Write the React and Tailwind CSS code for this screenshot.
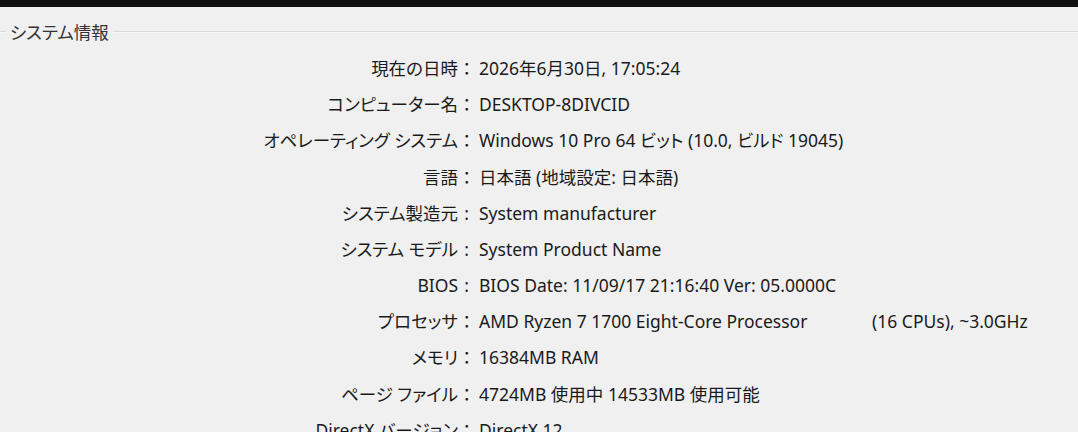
import React from "react";

// colon is drawn in its own fixed box so every label lines up on it
const rows = [
  { label: "現在の日時", colon: "：", value: "2026年6月30日, 17:05:24" },
  { label: "コンピューター名", colon: "：", value: "DESKTOP-8DIVCID" },
  { label: "オペレーティング システム", colon: "：", value: "Windows 10 Pro 64 ビット (10.0, ビルド 19045)" },
  { label: "言語", colon: "：", value: "日本語 (地域設定: 日本語)" },
  { label: "システム製造元", colon: ":", value: "System manufacturer" },
  { label: "システム モデル", colon: ":", value: "System Product Name" },
  { label: "BIOS", colon: ":", value: "BIOS Date: 11/09/17 21:16:40 Ver: 05.0000C" },
  { label: "プロセッサ", colon: "：", value: "AMD Ryzen 7 1700 Eight-Core Processor", extra: "(16 CPUs), ~3.0GHz" },
  { label: "メモリ", colon: "：", value: "16384MB RAM" },
  { label: "ページ ファイル", colon: "：", value: "4724MB 使用中 14533MB 使用可能" },
  { label: "DirectX バージョン", colon: "：", value: "DirectX 12" },
];

const App = () => {
  return (
    <div
      className="h-[432px] w-[1078px] overflow-hidden bg-[#f0f0f0] text-[#1a1a1a] [font-feature-settings:'palt']"
      style={{ fontFamily: '"Noto Sans", "Noto Sans CJK JP", sans-serif' }}
    >
      <div className="h-[7px] bg-[#111111]" />

      {/* group box header */}
      <div className="mt-[14px] flex items-center">
        <div className="h-[2px] w-[6px] border-t border-b border-t-[#d8d8d8] border-b-[#f8f8f8]" />
        <span className="px-[4px] text-[17.5px] leading-[22px] text-[#333333]">システム情報</span>
        <div className="h-[2px] flex-1 border-t border-b border-t-[#d9d9d9] border-b-[#f8f8f8]" />
      </div>

      <div className="mt-[7px] grid grid-cols-[475px_1fr] gap-x-[4px] text-[17.5px]">
        {rows.map((row, i) => (
          <React.Fragment key={i}>
            <div className="flex h-[36.2px] items-center justify-end whitespace-nowrap">
              <span>{row.label}</span>
              <span className="w-[17px] text-center [font-feature-settings:normal]">
                {row.colon === "：" ? <span className="inline-block w-[17px]">：</span> : ":"}
              </span>
            </div>
            <div className="flex h-[36.2px] items-center whitespace-nowrap">
              <span className={row.extra ? "w-[393px]" : ""}>{row.value}</span>
              {row.extra && <span>{row.extra}</span>}
            </div>
          </React.Fragment>
        ))}
      </div>
    </div>
  );
};

export default App;
